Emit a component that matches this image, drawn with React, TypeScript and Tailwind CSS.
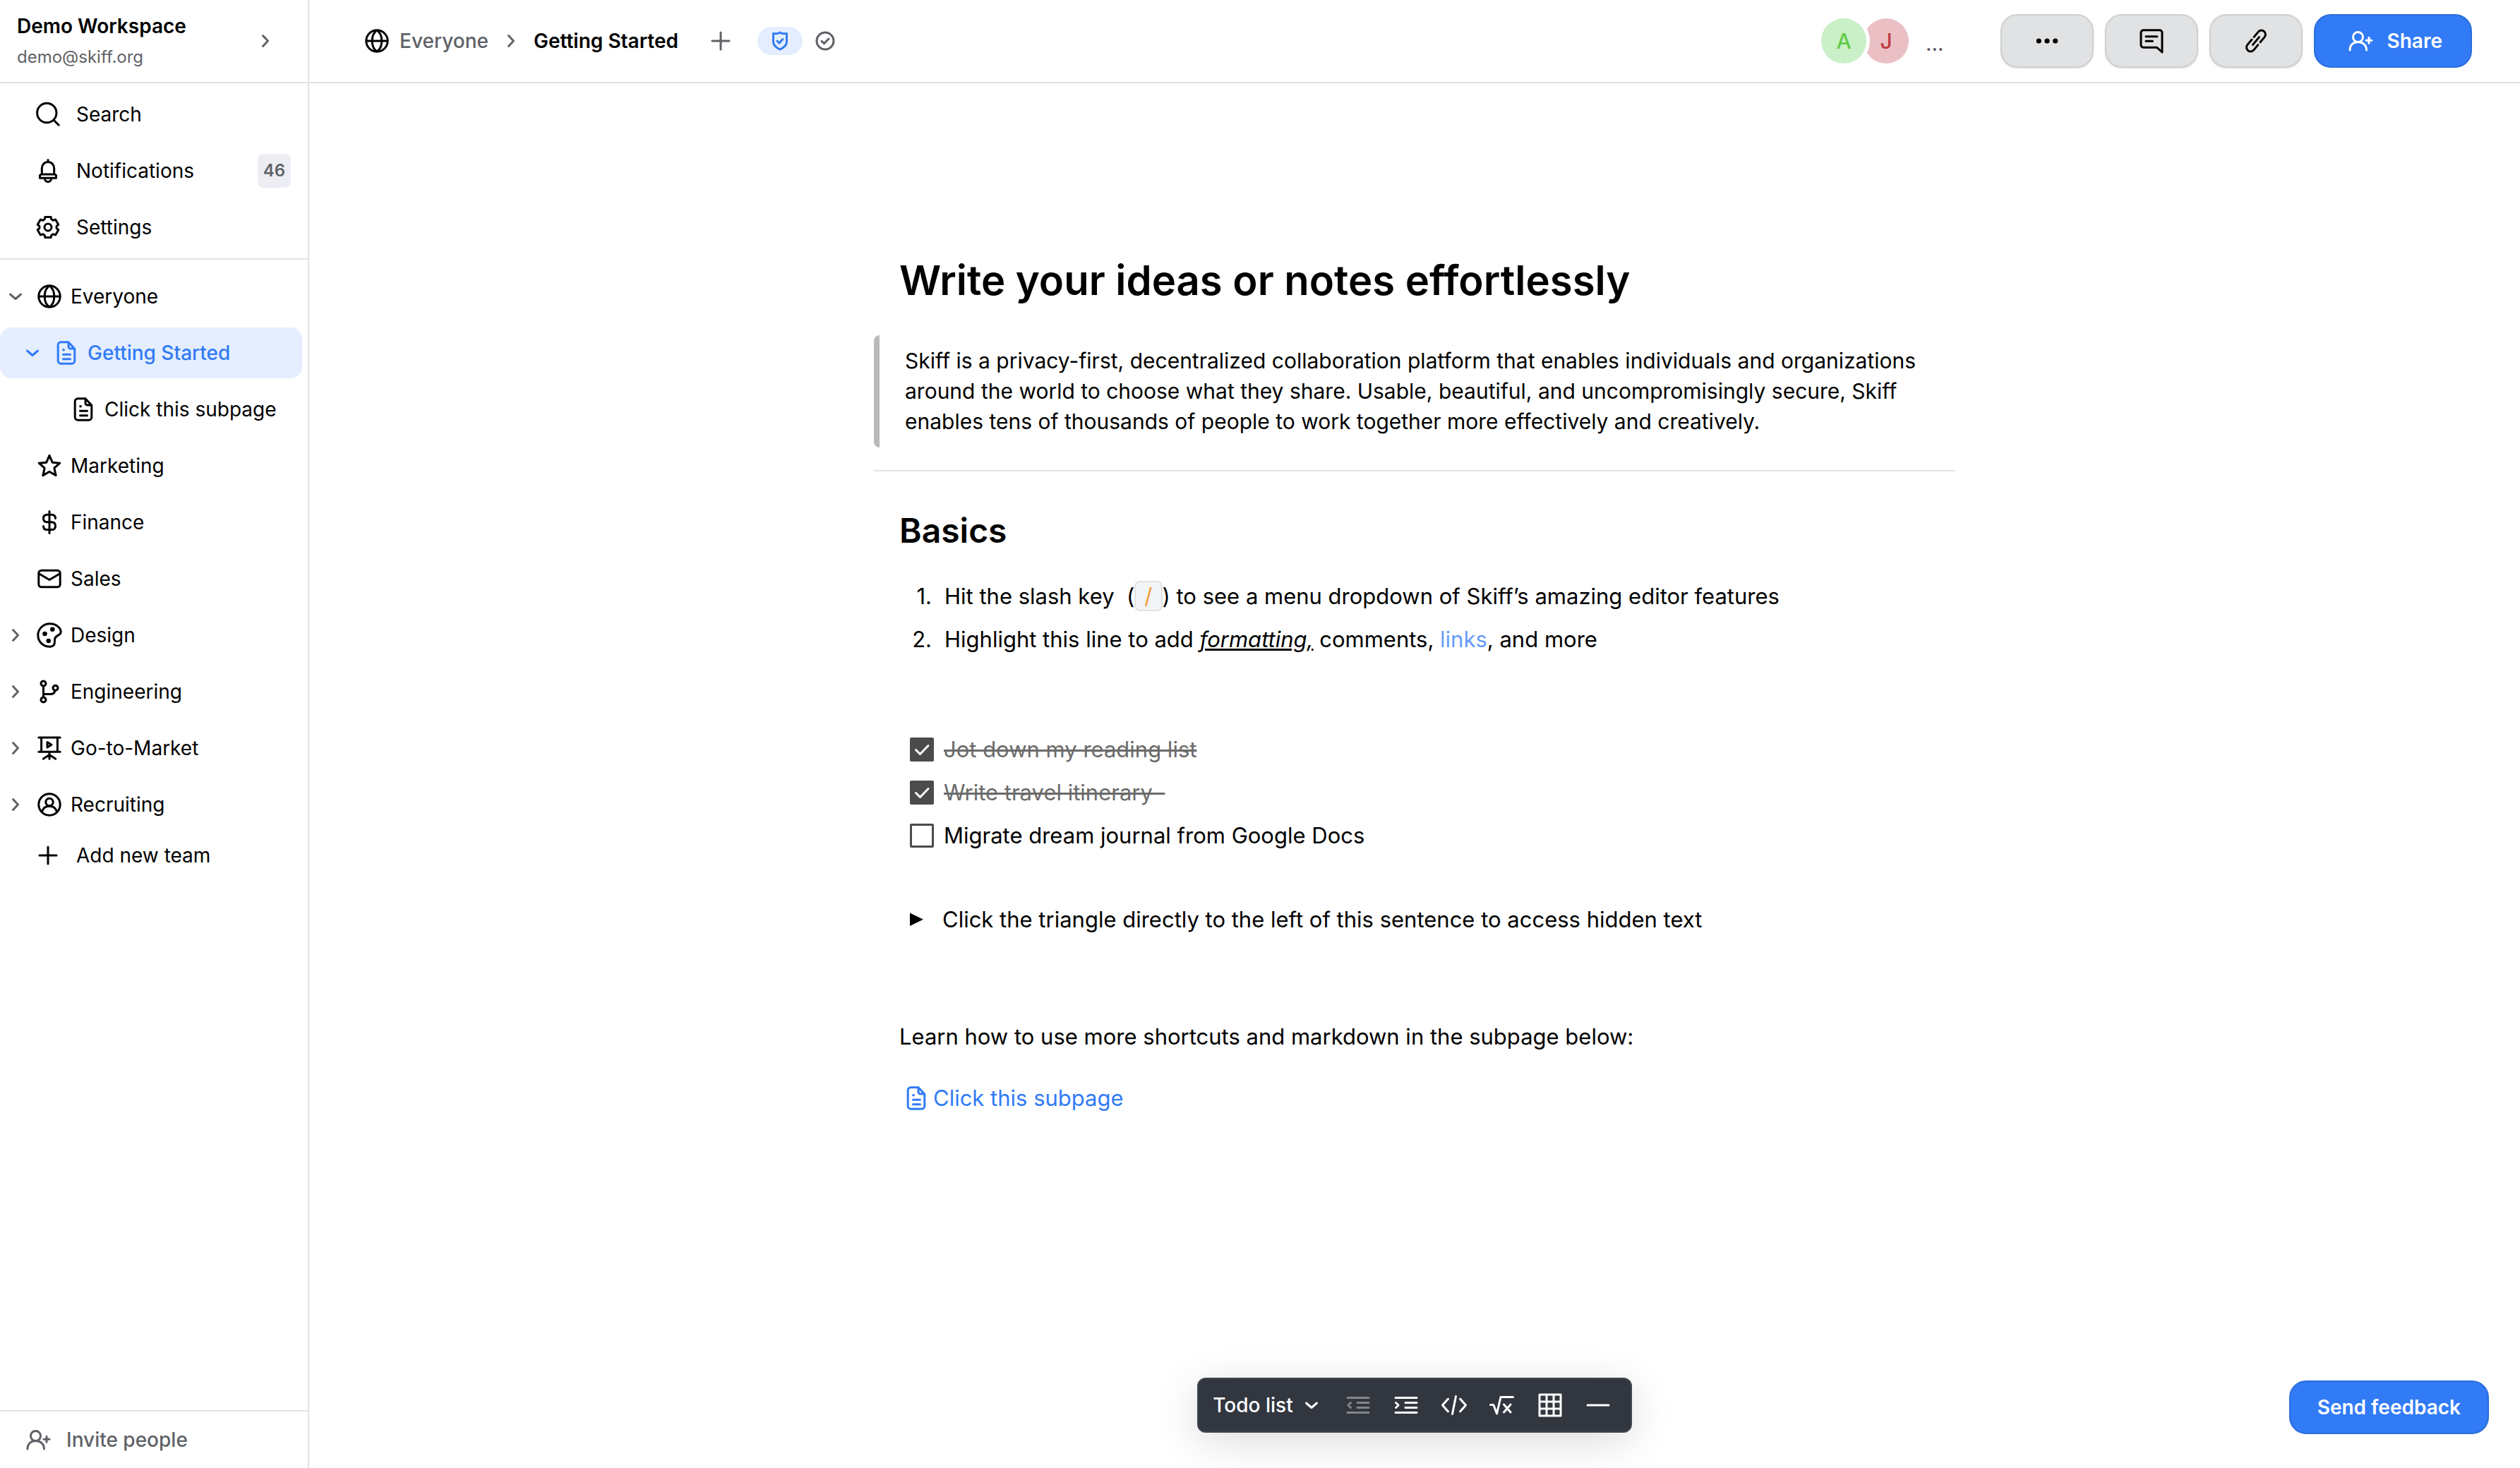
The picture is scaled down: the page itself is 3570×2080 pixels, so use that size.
import type { ReactNode } from "react";

const polar = (cx: number, cy: number, r: number, deg: number) => {
  const a = (deg * Math.PI) / 180;
  return `${(cx + r * Math.cos(a)).toFixed(2)} ${(cy + r * Math.sin(a)).toFixed(2)}`;
};

const gearPath =
  "M" +
  [0, 60, 120, 180, 240, 300]
    .flatMap((k) => [
      polar(20, 20, 12.2, k - 90 - 23),
      polar(20, 20, 15.2, k - 90 - 16),
      polar(20, 20, 15.2, k - 90 + 16),
      polar(20, 20, 12.2, k - 90 + 23),
    ])
    .join("L") +
  "Z";

const starPath =
  "M" +
  Array.from({ length: 10 }, (_, i) => polar(20, 21, i % 2 ? 7.2 : 15.6, i * 36 - 90)).join("L") +
  "Z";

const icons: Record<string, ReactNode> = {
  search: (
    <>
      <circle cx="18.3" cy="18" r="13.7" />
      <path d="M28.2 28.2 35.2 35.2" />
    </>
  ),
  bell: (
    <path d="M20 4.5v3M20 7.5c5 0 8.7 4 8.7 9v8l2.8 2v3.7h-23v-3.7l2.8-2v-8c0-5 3.7-9 8.7-9zM11.3 25h17.4M15.5 31.5a4.5 4 0 0 0 9 0" />
  ),
  gear: (
    <>
      <path d={gearPath} />
      <circle cx="20" cy="20" r="5" />
    </>
  ),
  globe: (
    <path d="M20 4.8a15.2 15.2 0 1 0 0 30.4a15.2 15.2 0 1 0 0-30.4zM5 20h30M20 4.8c-4.6 3.2-6.8 9-6.8 15.2s2.2 12 6.8 15.2c4.6-3.2 6.8-9 6.8-15.2s-2.2-12-6.8-15.2z" />
  ),
  doc: (
    <>
      <path d="M12.2 4.8H23l8.8 9.4v17a4 4 0 0 1-4 4H12.2a4 4 0 0 1-4-4V8.8a4 4 0 0 1 4-4zM23 5.5v5.5a3 3 0 0 0 3 3h5M15.5 22.3h10M15.5 28.7h10" />
      <path d="M16 15.7h.1" strokeWidth="3.6" />
    </>
  ),
  star: <path d={starPath} />,
  dollar: (
    <path d="M20 4.5v31M28.5 14.5c0-3.4-2-5.2-5.5-5.2h-6c-3.5 0-5.5 2-5.5 5.2s2 5.3 5.5 5.3h6c3.5 0 5.5 2 5.5 5.4s-2 5.4-5.5 5.4h-6c-3.5 0-5.5-1.8-5.5-5.2" />
  ),
  mail: (
    <path d="M8.8 8.2h22.4a4 4 0 0 1 4 4v15.6a4 4 0 0 1-4 4H8.8a4 4 0 0 1-4-4V12.2a4 4 0 0 1 4-4zM5.5 13 20 21.5 34.5 13" />
  ),
  palette: (
    <>
      <path d="M20.5 3.8C30 3.8 36.2 10 36.2 15.4C36.2 20.5 28.5 20 27.6 25.2C27 29.5 29.2 35.6 21 36.2C11 36.4 3.8 29 3.8 20S11.5 3.8 20.5 3.8Z" />
      <g fill="currentColor" stroke="none">
        <circle cx="13.5" cy="18" r="3.3" />
        <circle cx="24.3" cy="11.8" r="3.3" />
        <circle cx="18.7" cy="28" r="3.3" />
      </g>
    </>
  ),
  branch: (
    <>
      <circle cx="11.5" cy="8.5" r="3.5" />
      <circle cx="28.5" cy="14.8" r="3.5" />
      <circle cx="11.5" cy="31.5" r="3.5" />
      <path d="M11.5 12v16M11.5 23.5H22c3.6 0 5.2-1.7 6-5.2" />
    </>
  ),
  board: (
    <path d="M4.8 5h30.4M8.6 5v20.3M31.4 5v20.3M4.8 25.3h30.4M17 11.5v7.4l6-3.7zM20 26v9.2M20 29.5l-8.8 5.7M20 29.5l8.8 5.7" />
  ),
  person: (
    <>
      <circle cx="20" cy="20" r="15.2" />
      <circle cx="20" cy="16.5" r="5.2" />
      <path d="M9.5 30.5c1.3-5.5 5.3-8.3 10.5-8.3s9.2 2.8 10.5 8.3" />
    </>
  ),
  plus: <path d="M20 8v24M8 20h24" />,
  userPlus: (
    <>
      <circle cx="16.5" cy="14.5" r="7" />
      <path d="M5 33c0-7.2 4.7-11.5 11.5-11.5S28.5 25.8 28.5 33M32 15.2v8M28 19.2h8" />
    </>
  ),
  comment: (
    <path d="M8.5 4.8h23a3.5 3.5 0 0 1 3.5 3.5V36l-7.5-6.8h-19a3.5 3.5 0 0 1-3.5-3.5V8.3a3.5 3.5 0 0 1 3.5-3.5zM12 13.7h16M12 20.3h9.5" />
  ),
  link: (
    <path
      transform="rotate(-50 20 20)"
      d="M17.5 14.2H8.1a5.8 5.8 0 0 0 0 11.6h9.4M22.5 14.2h9.4a5.8 5.8 0 0 1 0 11.6h-9.4M13 20h14"
    />
  ),
  shield: (
    <path d="M20 8c-2.5 1.8-6 2.2-9.5 1.4V21c0 5.5 4.5 8.7 9.5 11c5-2.3 9.5-5.5 9.5-11V9.4C26 10.2 22.5 9.8 20 8zM16 20l3 3 5-5.5" />
  ),
  checkCircle: (
    <>
      <circle cx="20" cy="20" r="12" />
      <path d="M15 20.3l3.5 3.4 6.5-6.7" />
    </>
  ),
  right: <path d="M16.5 12.5 23.5 20l-7 7.5" />,
  down: <path d="M12.5 17 20 23.5 27.5 17" />,
  outdent: <path d="M5 9.5h30M19 16.5h16M19 23.5h16M5 30.5h30M9.5 16.5 6 20l3.5 3.5" />,
  indent: <path d="M5 9.5h30M19 16.5h16M19 23.5h16M5 30.5h30M5.5 16.5 9 20l-3.5 3.5" />,
  code: <path d="M11.5 11 3.5 20l8 9M28.500 11l8 9-8 9M22.5 7.5l-5 25" />,
  sqrt: <path d="M3.5 19.5h4.3L12.5 32 18 8.5h17.5M22.5 19 32 30M32 19l-9.5 11" />,
  grid: <path d="M5 5h30v30H5zM5 15h30M5 25h30M15 5v30M25 5v30" />,
  minus: <path d="M5 20h30" />,
};

function Icon({ name, className = "" }: { name: string; className?: string }) {
  return (
    <svg
      viewBox="0 0 40 40"
      aria-hidden="true"
      className={`size-10 shrink-0 fill-none stroke-current stroke-3 ${className}`}
      strokeLinecap="round"
      strokeLinejoin="round"
    >
      {icons[name]}
    </svg>
  );
}

type Item = { label: string; icon: string; open?: boolean };

const teams: Item[] = [
  { label: "Marketing", icon: "star" },
  { label: "Finance", icon: "dollar" },
  { label: "Sales", icon: "mail" },
  { label: "Design", icon: "palette", open: false },
  { label: "Engineering", icon: "branch", open: false },
  { label: "Go-to-Market", icon: "board", open: false },
  { label: "Recruiting", icon: "person", open: false },
];

function TreeRow({ label, icon, open, level = 0, active = false }: Item & { level?: number; active?: boolean }) {
  const indent = ["pl-0", "pl-6", "pl-12"][level];
  return (
    <a
      href="#"
      className={`flex h-18 items-center rounded-2xl ${indent} ${active ? "bg-[#e4eefe] font-medium text-[#317bf6]" : ""}`}
    >
      <span className={`flex w-11 justify-center ${active ? "" : "text-[#5f6267]"}`}>
        {open !== undefined && <Icon name={open ? "down" : "right"} />}
      </span>
      <span className="flex w-13 justify-center">
        <Icon name={icon} />
      </span>
      <span className="pl-1">{label}</span>
    </a>
  );
}

function NavRow({ label, icon, badge }: { label: string; icon: string; badge?: string }) {
  return (
    <a href="#" className="flex h-20 items-center gap-5 pr-6 pl-12">
      <Icon name={icon} />
      <span>{label}</span>
      {badge && (
        <span className="ml-auto flex h-12 items-center rounded-lg bg-[#edeef3] px-2 text-2xl font-semibold text-[#5f6267]">
          {badge}
        </span>
      )}
    </a>
  );
}

function Sidebar() {
  return (
    <aside className="flex w-[438px] shrink-0 flex-col border-r-2 border-[#e1e2e3]">
      <button className="flex h-[118px] items-center justify-between border-b-2 border-[#e1e2e3] pr-10 pl-6 text-left">
        <span>
          <span className="block leading-[46px] font-semibold">Demo Workspace</span>
          <span className="block text-2xl leading-[42px] text-[#5f6267]">demo@skiff.org</span>
        </span>
        <Icon name="right" className="text-[#5f6267]" />
      </button>
      <nav aria-label="Workspace" className="border-b-2 border-[#e1e2e3] py-1">
        <NavRow label="Search" icon="search" />
        <NavRow label="Notifications" icon="bell" badge="46" />
        <NavRow label="Settings" icon="gear" />
      </nav>
      <nav aria-label="Teams" className="flex flex-col gap-2 py-4 pr-2">
        <TreeRow label="Everyone" icon="globe" open />
        <TreeRow label="Getting Started" icon="doc" open level={1} active />
        <TreeRow label="Click this subpage" icon="doc" level={2} />
        {teams.map((t) => (
          <TreeRow key={t.label} {...t} />
        ))}
        <button className="flex h-14 items-center gap-5 pl-12">
          <Icon name="plus" />
          Add new team
        </button>
      </nav>
      <button className="mt-auto flex h-[82px] items-center gap-5 border-t-2 border-[#e1e2e3] pl-[34px] font-medium text-[#5f6267]">
        <Icon name="userPlus" />
        Invite people
      </button>
    </aside>
  );
}

const greyButton =
  "flex h-[76px] w-33 items-center justify-center rounded-3xl border-2 border-[#cfd0d1] bg-[#e1e2e4] shadow-sm";
const blueButton =
  "flex h-[76px] items-center rounded-3xl border-2 border-[#2c6edb] bg-[#317bf6] font-semibold text-white";

function Header() {
  return (
    <header className="flex h-[118px] items-center justify-between border-b-2 border-[#e1e2e3] pr-17 pl-19">
      <nav aria-label="Breadcrumb" className="flex items-center">
        <Icon name="globe" />
        <a href="#" className="pl-3 font-medium text-[#5f6267]">
          Everyone
        </a>
        <Icon name="right" className="mx-3 text-[#5f6267]" />
        <a href="#" className="font-semibold">
          Getting Started
        </a>
        <button aria-label="Add page" className="ml-10 text-[#5f6267]">
          <Icon name="plus" />
        </button>
        <button
          aria-label="Protected"
          className="ml-8 flex h-10 w-16 items-center justify-center rounded-full bg-[#e4eefe] text-[#317bf6]"
        >
          <Icon name="shield" />
        </button>
        <button aria-label="Saved" className="ml-3 text-[#5f6267]">
          <Icon name="checkCircle" />
        </button>
      </nav>
      <div className="flex items-center gap-4">
        <div className="mr-16 flex items-center font-medium">
          <span className="z-10 flex size-16 items-center justify-center rounded-full bg-[#c9f0c6] text-3xl text-[#62cc4c] ring-5 ring-white">
            A
          </span>
          <span className="-ml-1 flex size-16 items-center justify-center rounded-full bg-[#ebc0c5] text-3xl text-[#c03a3f]">
            J
          </span>
          <span className="pt-2 pl-6 text-[#5f6267]">...</span>
        </div>
        <button aria-label="More" className={greyButton}>
          <svg viewBox="0 0 40 40" aria-hidden="true" className="size-10 fill-current">
            <circle cx="8.3" cy="20" r="3.6" />
            <circle cx="20" cy="20" r="3.6" />
            <circle cx="31.7" cy="20" r="3.6" />
          </svg>
        </button>
        <button aria-label="Comments" className={greyButton}>
          <Icon name="comment" />
        </button>
        <button aria-label="Copy link" className={greyButton}>
          <Icon name="link" />
        </button>
        <button className={`${blueButton} gap-[18px] pr-10 pl-11`}>
          <Icon name="userPlus" />
          Share
        </button>
      </div>
    </header>
  );
}

const todos = [
  { id: "reading", text: "Jot down my reading list", done: true },
  { id: "travel", text: "Write travel itinerary\u00a0\u00a0", done: true },
  { id: "dream", text: "Migrate dream journal from Google Docs", done: false },
];

function Todo({ id, text, done }: { id: string; text: string; done: boolean }) {
  return (
    <li className="flex items-center gap-3.5">
      <span className="relative flex">
        <input
          id={id}
          type="checkbox"
          defaultChecked={done}
          className="peer size-[34px] appearance-none rounded-xs border-3 border-[#4b4b4b] checked:bg-[#4b4b4b]"
        />
        <svg
          viewBox="0 0 34 34"
          aria-hidden="true"
          className="pointer-events-none absolute inset-0 hidden fill-none stroke-white stroke-3 peer-checked:block"
          strokeLinecap="round"
          strokeLinejoin="round"
        >
          <path d="M8.5 17.5l6 6L26 11.5" />
        </svg>
      </span>
      <label htmlFor={id} className={done ? "text-[#6b6b6b] line-through decoration-3" : ""}>
        {text}
      </label>
    </li>
  );
}

function Document() {
  return (
    <article className="mx-auto w-full max-w-[1532px] pt-[243px] text-[31px] leading-[61px]">
      <h1 className="px-9 text-[58px] leading-[72px] font-semibold">Write your ideas or notes effortlessly</h1>
      <blockquote className="mt-[42px] rounded-l-lg border-l-8 border-[#b9babc] px-9 py-[15px] text-[30px] leading-[43px]">
        Skiff is a privacy-first, decentralized collaboration platform that enables individuals and organizations around
        the world to choose what they share. Usable, beautiful, and uncompromisingly secure, Skiff enables tens of
        thousands of people to work together more effectively and creatively.
      </blockquote>
      <hr className="mt-8 border-t-2 border-[#e1e2e3]" />
      <h2 className="mt-[54px] px-9 text-5xl leading-[60px] font-semibold">Basics</h2>
      <ol className="mt-8">
        <li className="flex gap-[18px]">
          <span className="w-[82px] text-right">1.</span>
          <span>
            Hit the slash key {"\u00a0"}(
            <kbd className="rounded-lg border-2 border-[#e1e2e4] bg-[#f3f4f6] px-3 py-px font-['Inter'] text-[#f19a3e]">
              /
            </kbd>
            ) to see a menu dropdown of Skiff’s amazing editor features
          </span>
        </li>
        <li className="flex gap-[18px]">
          <span className="w-[82px] text-right">2.</span>
          <span>
            Highlight this line to add <em className="underline decoration-3">formatting,</em> comments,{" "}
            <a href="#" className="text-[#649cf8]">
              links
            </a>
            , and more
          </span>
        </li>
      </ol>
      <ul className="mt-[95px] pl-[51px]">
        {todos.map((t) => (
          <Todo key={t.id} {...t} />
        ))}
      </ul>
      <details className="mt-[58px] pl-[51px]">
        <summary className="flex list-none items-center gap-[26px]">
          <svg viewBox="0 0 20 20" aria-hidden="true" className="size-5 fill-current">
            <path d="M0 0.5 19 9.8 0 19z" />
          </svg>
          Click the triangle directly to the left of this sentence to access hidden text
        </summary>
      </details>
      <p className="mt-[105px] px-9">Learn how to use more shortcuts and markdown in the subpage below:</p>
      <a href="#" className="mt-[26px] ml-10 flex w-fit items-center gap-1 text-[#317bf6]">
        <Icon name="doc" />
        Click this subpage
      </a>
    </article>
  );
}

const tools = [
  { icon: "outdent", label: "Outdent" },
  { icon: "indent", label: "Indent" },
  { icon: "code", label: "Code block" },
  { icon: "sqrt", label: "Equation" },
  { icon: "grid", label: "Table" },
  { icon: "minus", label: "Divider" },
];

function Footer() {
  return (
    <footer className="mt-auto grid grid-cols-[1fr_auto_1fr] items-end pb-12">
      <div />
      <div
        role="toolbar"
        aria-label="Formatting"
        className="mb-0.5 flex h-[78px] items-center rounded-xl border-2 border-[#41464f] bg-[#31363f] pr-3 pl-5 text-white shadow-[0_12px_60px_rgba(0,0,0,0.14)]"
      >
        <button className="flex items-center gap-1.5 pr-3 font-medium">
          Todo list
          <Icon name="down" />
        </button>
        {tools.map((t) => (
          <button
            key={t.icon}
            aria-label={t.label}
            disabled={t.icon === "outdent"}
            className="flex w-17 justify-center disabled:opacity-40"
          >
            <Icon name={t.icon} />
          </button>
        ))}
      </div>
      <div className="flex justify-end pr-11">
        <button className={`${blueButton} px-[38px]`}>Send feedback</button>
      </div>
    </footer>
  );
}

export default function App() {
  return (
    <div className="flex min-h-screen bg-white font-['Inter',sans-serif] text-[28px] leading-10 text-black">
      <Sidebar />
      <main className="flex min-w-0 flex-1 flex-col">
        <Header />
        <Document />
        <Footer />
      </main>
    </div>
  );
}
